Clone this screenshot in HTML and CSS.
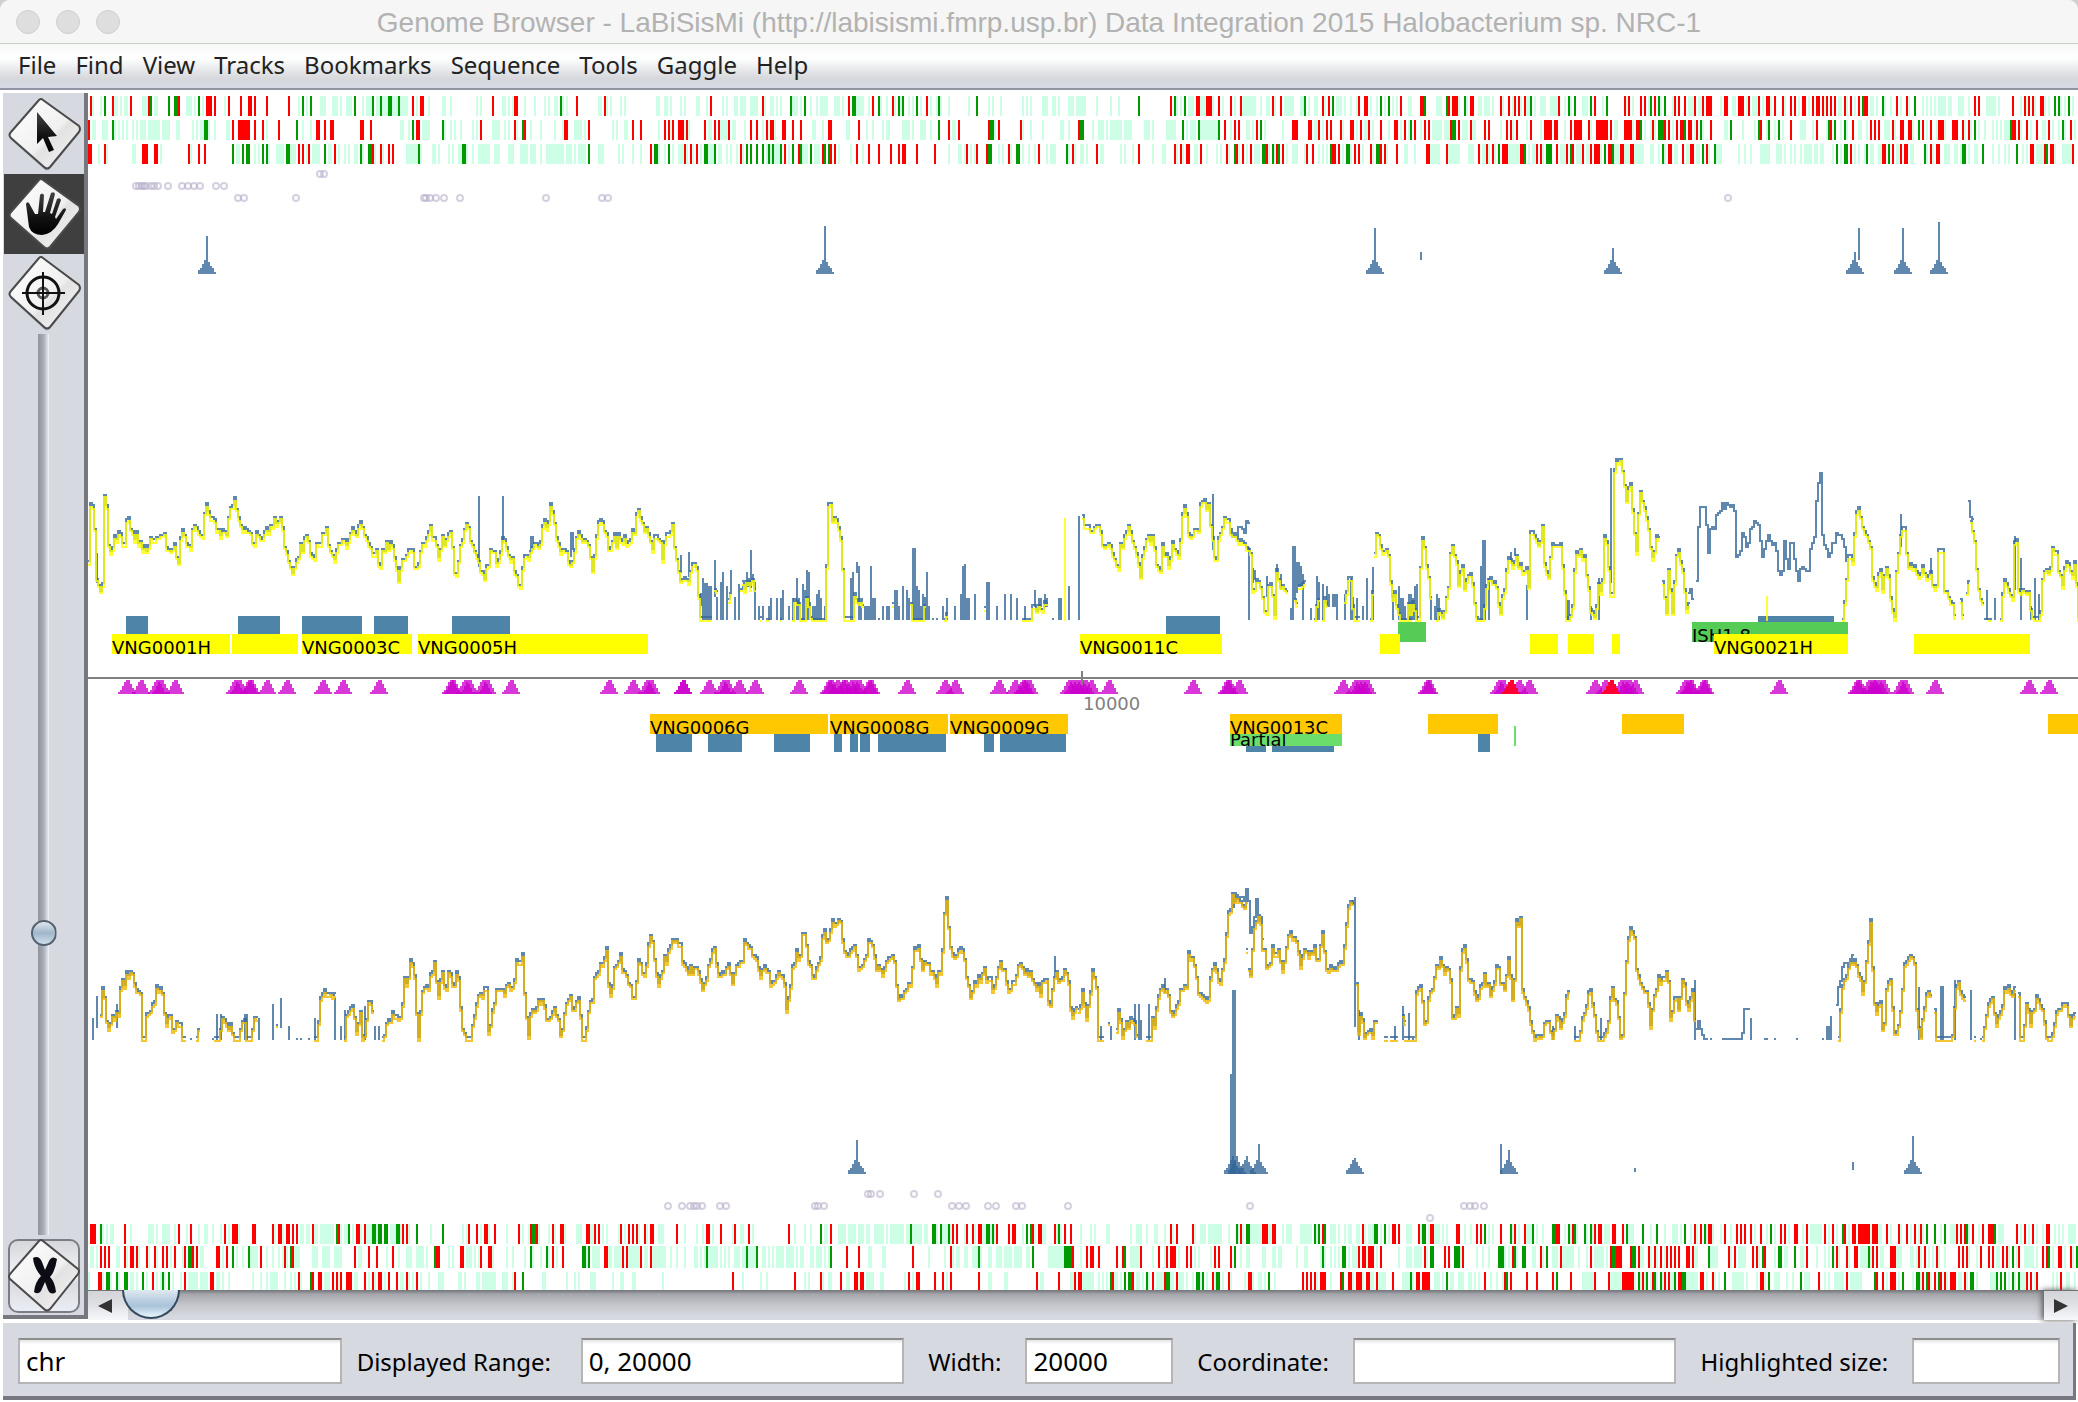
FILE: index.html
```html
<!DOCTYPE html>
<html lang="en">
<head>
    <meta charset="UTF-8">
    <meta name="viewport" content="width=device-width, initial-scale=1.0">
    <title>Genome Browser</title>
    <link rel="stylesheet" href="styles.css">
</head>
<body>
    <div class="window">
        <header class="titlebar">
            <div class="lights">
                <button class="light" aria-label="Close"></button>
                <button class="light" aria-label="Minimize"></button>
                <button class="light" aria-label="Zoom"></button>
            </div>
            <h1>Genome Browser - LaBiSisMi (http://labisismi.fmrp.usp.br) Data Integration 2015 Halobacterium sp. NRC-1</h1>
        </header>

        <nav class="menubar">
            <button>File</button>
            <button>Find</button>
            <button>View</button>
            <button>Tracks</button>
            <button>Bookmarks</button>
            <button>Sequence</button>
            <button>Tools</button>
            <button>Gaggle</button>
            <button>Help</button>
        </nav>

        <main class="workspace">
            <aside class="toolbar">
                <svg class="defs" width="0" height="0">
                    <defs>
                        <linearGradient id="tile" x1="0" y1="0" x2="1" y2="1">
                            <stop offset="0" stop-color="#ffffff"/>
                            <stop offset="0.55" stop-color="#f0f0f0"/>
                            <stop offset="0.6" stop-color="#e2e2e2"/>
                            <stop offset="1" stop-color="#f8f8f8"/>
                        </linearGradient>
                        <linearGradient id="ink" x1="0" y1="0" x2="0" y2="1">
                            <stop offset="0" stop-color="#444"/>
                            <stop offset="0.6" stop-color="#111"/>
                            <stop offset="1" stop-color="#000"/>
                        </linearGradient>
                    </defs>
                </svg>
                <button class="tool" aria-label="Select">
                    <svg viewBox="0 0 80 80" width="80" height="80">
                        <path class="shade" d="M39 8 Q37 6 35 8 L7 40 Q4 43 7 46 L40 75 Q43 78 46 75 L75 40 Q77 37 75 34 Z"/>
                        <path class="diamond" d="M39 6 Q37 4 35 6 L7 38 Q4 41 7 44 L40 73 Q43 76 46 73 L75 38 Q77 35 75 32 Z"/>
                        <path fill="url(#ink)" d="M33 18 L33 50 L39 44 L45 58 L50 56 L44 43 L53 42 Z"/>
                    </svg>
                </button>
                <button class="tool selected" aria-label="Scroll">
                    <svg viewBox="0 0 80 80" width="80" height="80">
                        <path class="diamond" d="M39 6 Q37 4 35 6 L7 38 Q4 41 7 44 L40 73 Q43 76 46 73 L75 38 Q77 35 75 32 Z"/>
                        <path fill="url(#ink)" d="M22 30 Q23 27 25 29 L31 40 L34 40 L36 21 Q38 18 40 21 L39 38 L41 38 L47 19 Q50 17 51 20 L46 39 L48 40 L53 25 Q56 23 57 26 L51 43 L52 45 L59 35 Q62 33 62 36 L54 50 Q48 60 38 61 Q28 61 25 53 Z"/>
                    </svg>
                </button>
                <button class="tool" aria-label="Center">
                    <svg viewBox="0 0 80 80" width="80" height="80">
                        <path class="shade" d="M39 6 Q37 4 35 6 L7 39 Q4 42 7 45 L40 75 Q43 78 46 75 L75 39 Q77 36 75 33 Z"/>
                        <path class="diamond" d="M39 4 Q37 2 35 4 L7 37 Q4 40 7 43 L40 73 Q43 76 46 73 L75 37 Q77 34 75 31 Z"/>
                        <g fill="none" stroke="#111">
                            <circle cx="39" cy="39" r="16" stroke-width="3"/>
                            <circle cx="39" cy="39" r="5" stroke="#555" stroke-width="3"/>
                            <path stroke-width="2" d="M39 18 V61 M18 39 H61"/>
                        </g>
                    </svg>
                </button>
                <input class="zoom" type="range" min="0" max="100" value="67" aria-label="Zoom level">
                <button class="chromosome" aria-label="Chromosomes">
                    <svg viewBox="0 0 72 74" width="72" height="74">
                        <path class="diamond" d="M35 2 Q33 0 31 2 L2 35 Q0 38 2 40 L36 70 Q39 73 42 70 L70 35 Q72 32 70 30 Z"/>
                        <path fill="#0c0c14" d="M25 19 Q31 16 34 23 L37 31 L41 22 Q44 16 49 20 Q47 33 42 38 Q47 43 48 53 Q43 57 40 51 L37 43 L33 52 Q30 56 26 53 Q27 43 33 37 Q26 29 25 19 Z"/>
                    </svg>
                </button>
            </aside>

            <section class="viewer">
                <svg class="plot" id="plot" role="img" aria-label="Genome tracks"></svg>
                <div class="scrollbar">
                    <button class="step" aria-label="Scroll left"><svg width="14" height="14"><path d="M14 0 V14 L0 7 Z"/></svg></button>
                    <div class="groove"><div class="thumb"></div></div>
                    <button class="step end" aria-label="Scroll right"><svg width="14" height="14"><path d="M0 0 V14 L14 7 Z"/></svg></button>
                </div>
            </section>
        </main>

        <form class="status">
            <input class="wide" type="text" id="seq" value="chr" aria-label="Sequence">
            <label class="first" for="range">Displayed Range:</label>
            <input class="wide" type="text" id="range" value="0, 20000">
            <label for="width">Width:</label>
            <input class="narrow" type="text" id="width" value="20000">
            <label for="coordinate">Coordinate:</label>
            <input class="wide" type="text" id="coordinate">
            <label for="highlight">Highlighted size:</label>
            <input class="narrow" type="text" id="highlight">
        </form>
    </div>
    <script src="tracks.js"></script>
</body>
</html>
```

FILE: styles.css
```css
* {
    box-sizing: border-box;
}
html, body {
    height: 100%;
    margin: 0;
}
body {
    background: #d0d0d0;
    color: #000;
    font-family: "Noto Sans", "Open Sans", sans-serif;
    font-size: 24px;
}
button {
    border: none;
    background: none;
    padding: 0;
    font: inherit;
    color: inherit;
}
.window {
    display: flex;
    flex-direction: column;
    height: 100vh;
    background: #fff;
    border-radius: 10px 10px 0 0;
    overflow: hidden;
}

/* title bar */
.titlebar {
    display: flex;
    align-items: center;
    height: 44px;
    flex: none;
    padding: 0 16px;
    background: #f6f6f6;
    border-bottom: 1px solid #c9cdc9;
}
.lights {
    display: flex;
    gap: 16px;
    width: 104px;
}
.light {
    width: 24px;
    height: 24px;
    border-radius: 50%;
    background: #dedede;
    border: 1px solid #cecece;
}
.titlebar h1 {
    flex: 1;
    margin: 0 104px 0 0;
    padding-top: 2px;
    text-align: center;
    font: 28px "Liberation Sans", Arial, sans-serif;
    color: #b2b2b2;
    white-space: nowrap;
}

/* menu bar */
.menubar {
    display: flex;
    gap: 19px;
    height: 46px;
    flex: none;
    padding: 0 18px 4px;
    background: linear-gradient(#f5f8f5, #fdfefd 24%, #fbfcfc 36%, #d6d8dc 78%, #d6d9e2);
    border-bottom: 2px solid #9293a3;
    color: #222;
}

/* tool column */
.workspace {
    display: flex;
    flex: 1;
    min-height: 0;
}
.toolbar {
    display: flex;
    flex-direction: column;
    align-items: center;
    width: 85px;
    margin: 3px 0 1px 3px;
    padding: 1px 0 2px;
    background: #d6d9e0;
    border-right: 4px solid;
    border-bottom: 4px solid;
    border-color: #77787f;
    flex: none;
}
.defs {
    position: absolute;
}
.tool {
    width: 80px;
    height: 80px;
    flex: none;
}
.tool svg, .chromosome svg {
    display: block;
}
.tool.selected {
    background: #3f3f3f;
}
.diamond {
    fill: url(#tile);
    stroke: #4a4a4a;
    stroke-width: 2;
}
.shade {
    fill: #b3b6bd;
}
.zoom {
    appearance: none;
    writing-mode: vertical-lr;
    flex: 1;
    min-height: 0;
    width: 26px;
    margin: 0;
    background: linear-gradient(to right, #8f939f, #a9adb7 50%, #d3d6dd 82%, #f4f5f7) center / 11px 100% no-repeat;
    clip-path: inset(0 round 6px);
}
.zoom::-webkit-slider-thumb {
    appearance: none;
    width: 26px;
    height: 26px;
    border: 2px solid #53606d;
    border-radius: 50%;
    background: linear-gradient(#dfe7ee, #9fb6ca 50%, #cfdeea);
}
.chromosome {
    width: 72px;
    height: 74px;
    margin-top: 4px;
    flex: none;
    border-radius: 10px;
    background: linear-gradient(#d3d5da, #f4f5f7 50%, #d9dbe1 60%, #eceef5);
    box-shadow: inset 0 0 0 2px #7b7d85;
}

/* tracks */
.viewer {
    display: flex;
    flex-direction: column;
    flex: 1;
    min-width: 0;
}
.plot {
    display: block;
    width: 100%;
    flex: 1;
    min-height: 0;
    background: #fff;
}
.plot text {
    font: 18px "DejaVu Sans", sans-serif;
}
.crisp {
    shape-rendering: crispEdges;
}
.l { fill: #ccffe6; }
.g { fill: #009900; }
.r { fill: #ff0000; }
.circle {
    fill: none;
    stroke: #b9afca;
    stroke-opacity: 0.6;
    stroke-width: 2;
}
.trace, .yellow-trace, .gold-trace {
    fill: none;
    stroke-width: 2;
}
.trace { stroke: rgba(51, 102, 153, 0.78); }
.yellow-trace { stroke: rgba(255, 255, 0, 0.8); }
.gold-trace { stroke: rgba(240, 184, 0, 0.8); }
.bar { fill: rgba(51, 102, 153, 0.78); }
.site { fill: rgba(204, 0, 204, 0.78); }
.site.hot { fill: #ff0033; }
.probe { fill: #4f84a9; }
.forward { fill: #ffff00; }
.reverse { fill: #ffc800; }
.element { fill: #55cc55; }
.partial { fill: #6bdd6b; }
.axis, .axis-label { fill: #808080; }

/* horizontal scroll bar */
.scrollbar {
    display: flex;
    height: 30px;
    flex: none;
    background: linear-gradient(#737478, #a5a6ab 14%, #c4c6cb 50%, #d6d9e0 90%);
}
.step {
    display: flex;
    align-items: center;
    padding-left: 10px;
    width: 40px;
    background: linear-gradient(#d3d4d8, #dcdee2 40%, #f7f8fa);
    border-top: 1px solid #737478;
    fill: #333;
}
.step.end {
    width: 34px;
    box-shadow: -2px 0 6px #555;
}
.groove {
    flex: 1;
    margin-left: -6px;
    overflow: hidden;
    z-index: 1;
}
.thumb {
    width: 58px;
    height: 29px;
    border: 2px solid #34495e;
    border-top: none;
    border-radius: 0 0 29px 29px;
    background: linear-gradient(#dfe8f0, #b4cade 45%, #abc4da 60%, #e6f6fc);
}

/* status fields */
.status {
    display: flex;
    align-items: center;
    gap: 24px;
    flex: none;
    height: 77px;
    margin: 3px 2px 2px 3px;
    padding: 3px 13px 0 15px;
    background: #d6d9e0;
    border-right: 3px solid #77787f;
    border-bottom: 4px solid #77787f;
}
.status label {
    flex: none;
    white-space: nowrap;
}
.status .first {
    width: 200px;
    margin-left: -9px;
}
.status input {
    min-width: 0;
    height: 46px;
    padding: 0 6px;
    font: inherit;
    font-size: 26px;
    border: 2px solid #b5b5b5;
    border-top-color: #8d8d8d;
    background: linear-gradient(#e4e4e4, #fff 4px);
}
.status .wide {
    flex: 324 1 324px;
}
.status .narrow {
    flex: 148 1 148px;
}
```

FILE: tracks.js
```js
// Tracks come in tiles. A tile covers `w` units of the strip from `x`,
// and the positions in it run from 0 to 1568.
const STRIP = { left: 88, top: 90, width: 1990, height: 1200 };

// open reading frames: l = codon hit, g = start, r = stop
const frames = [
    { y: 96, h: 20, tiles: [
        { x: 0, w: 700,
          l: "209 226 257-264 271 280 285 318-331 346-354 418-430 437 452-458 504 670 685-692 718-729 744-757 764 775-788 812 820-832 840-850 857-868 880-892 897-914 930-938 961 990-999 1010 1069 1077 1124-1133 1139 1148 1175 1198 1220 1228 1243 1249 1262 1270 1338-1344",
          g: "235 338 378 391-400 446 679 697 795 836 853 869-878 894 1257",
          r: "204 253 293 334 401 462-475 481 513 540 558 562 571 598 648 925 941-950 1104 1154 1158 1293" },
        { x: 600, w: 740,
          l: "2 15 23 45 53 119-127 136-144 151 172 180 203-212 227 261 269 284-292 297-309 318-335 348 360-370 375 384 407-420 427 447 460 466-483 496-509 515 543-559 570 595 609 625 636 654 664 680 700 712 722 741 780 824 832 850 895 904 913 937-949 958-966 972 991-999 1003 1007-1030 1053 1083 1100 1224 1232 1244-1260 1273-1284 1300 1318 1345 1360-1387 1390 1398-1404 1412-1420 1432 1449-1471 1484-1492 1502 1513-1522 1538 1560",
          g: "405 434 534-542 591 633 642 672 718 799 1142 1218 1240 1494 1553",
          r: "10 235 345 527 579 621 693 1210 1263-1271 1284-1297 1312 1337 1358 1426 1443 1532 1545" },
        { x: 1338, w: 740,
          l: "0-8 15 27 40 70 83 98 116 124 148-157 208-220 239 258 275 297-305 309-321 329 350 370 388 400-406 418 428-441 449-466 480 494 517-531 560 612 625 656-664 672 686 708 740-754 762-770 812 836 842 865 877-890 900 918 948 975 996 1018 1033 1060-1070 1078 1096 1127-1135 1144 1160 1172 1192 1212 1240 1248 1257 1265 1271-1288 1293-1301 1314-1326 1337 1373-1394 1400 1447 1460 1478 1498 1508 1530 1542 1558",
          g: "91 108 184 231 269 409 489 502 536 570 663 680 693 1110-1116 1155 1222 1519 1528 1549",
          r: "44 56-64 133 175-183 234 243-253 281-287 345 362 375 383 396 468 544 608 616 642 650 670 714 723 735 756 773 780-792 818-826 848-860 871 892 908-915 926 943 960 967 983-992 1006 1013-1021 1028 1037 1045 1053 1074 1087 1105 1116-1122 1184 1206 1350 1358 1430 1456 1464 1473 1488-1495" }
    ] },
    { y: 120, h: 20, tiles: [
        { x: 0, w: 700,
          l: "204-215 229-240 258 266 275 284 297 307 314-327 332-357 363-381 395-403 432 443 450-456 470 481 507-515 598 677 697 897-905 918 946-963 999 1010 1019 1033 1060 1067 1102-1120 1133 1142 1160 1185-1193 1211 1239-1247 1261 1286-1304 1312",
          g: "253 458-466 666 925 992 1171",
          r: "200 522 534-559 571 590 625 708-717 728 740-747 806-815 831 932-941 1073-1079 1154 1175 1265-1271 1319" },
        { x: 600, w: 740,
          l: "27 36 51-59 125 149 180-190 229-238 256-270 280-288 307 322 346 358 372 449-457 472 521-530 566 578 600 606-614 640-657 662 678-691 701 746-754 838 895 913 939 975-983 994 1045 1056-1068 1073 1081-1106 1110-1127 1153-1165 1172 1199-1220 1244 1252-1264 1273-1308 1336 1369-1377 1384 1408 1447 1513-1520 1530",
          g: "718 826-834 1017-1026 1235 1269 1312 1401",
          r: "70 87 138 146 155 165-178 184 222 243 252 273 320 333 354 360-369 386-394 409 426 483-492 549 739 761 824 846 892 1015 1324 1345 1354 1392 1466-1478 1500-1509 1524 1541 1549" },
        { x: 1338, w: 740,
          l: "12 40 56-62 75 110 132 150 175 199-220 226-240 262-275 285-292 345 370 400 430 480 536 585-593 627 652 660-675 710 755 775 818-826 860 884 910 922-929 942 980-992 1005 1035 1066 1080 1102-1110 1121 1155-1168 1181 1218 1250 1268 1285 1330 1343 1357 1370 1388 1396 1403 1411-1425 1447 1470 1490-1500 1515 1528 1542 1562",
          g: "142 155 241-250 643 678-691 736 769 833 890 914 935 960 1041 1053 1074 1231 1350 1426 1536",
          r: "6 25-34 49 66 91 119-127 144 163 184 193 240 257 282 311 320 358 367 379 409 436-453 458-466 492 500-517 532 547-572 578 606-623 632-642 668 693 701 718 725-735 743-750 761 789 895 958 1015 1046 1091 1129 1137 1146 1174 1191-1199 1208-1215 1240 1257 1272-1284 1301-1314 1324 1337 1430 1434 1443 1460 1481 1507 1553" }
    ] },
    { y: 144, h: 20, tiles: [
        { x: 0, w: 700,
          l: "222 239 296-305 360 428 530-538 571 578 604 620-632 636 651-658 663 688 700-717 733-745 759 773 782 795-802 815 840 860 910-935 942 968-977 983 1006 1016 1026-1034 1046 1060 1072-1097 1107-1119 1139-1151 1166-1182 1188-1200 1212 1223-1262 1266-1280 1284-1292 1296-1312 1340-1344",
          g: "522 544 551-560 590 598 642-650 728 809 825-835 939 1036-1044 1319",
          r: "198-206 235 318-331 346-353 423 446 459 670 679 692 751 836 853 871 881" },
        { x: 600, w: 740,
          l: "0-8 40 48 70 87 125 138 155 165-178 186 199 212 230-240 248-260 267 276 292 305 350-382 400 430-440 455-465 507 530 557 740 759-767 772 785 795 846 855 872 898 907 920 947 954-966 995 1006 1017-1026 1033 1060-1068 1104 1112 1130 1172 1191-1199 1222 1235 1260-1268 1286 1307 1315 1332 1355 1370 1384-1400 1418 1430 1456 1466-1478 1494 1524 1531 1539",
          g: "114-123 146 220-229 244 311 320 333 346 358 366 383 409 426 447 477 486 822-831 882-890 990 1345 1404-1412 1426 1440 1550",
          r: "108 180 193 206 299 392 422 469-474 490 498 545 570 591 616 634 640-648 672 710 778 799 820 867 930 1002 1053 1142 1218 1230 1243-1250 1273 1328 1349 1362 1379 1413 1434 1446 1498 1511 1552-1560" },
        { x: 1338, w: 740,
          l: "10 27 55 75 105 140-148 163 197-216 233-259 275-283 288 305-315 322 334 362-385 405 412-420 436 470-485 506-515 525-535 558 586-597 608-618 629-648 661-670 680 692 712-722 737-744 757-765 785 803-813 850 862 873 894-915 928-941 948 958 968 982 988-1003 1009-1017 1021-1029 1050 1062-1070 1095 1105 1117 1129-1137 1145-1152 1182-1190 1212-1222 1248 1262 1285-1297 1305-1313 1320 1336 1346-1354 1388 1400 1413 1422 1450 1460 1480-1495 1520 1534-1554",
          g: "17-25 38 81-89 341 396 432 441-453 493 566 583 689 771-777 799 1057 1073-1081 1121 1168 1244 1322-1331 1367 1439 1504",
          r: "2 34 43 70 91 100 125 186-195 231 299 316 328 348-360 386-394 422 430 464 487 499 519 536 543-555 570-581 598-605 619-627 699-708 731 746-754 780 1087 1153-1161 1176 1191 1200-1208 1257 1267-1276 1467-1475 1498 1510-1517 1558" }
    ] },
    { y: 1224, h: 20, tiles: [
        { x: 0, w: 700,
          l: "232 240 246-254 292 333-345 350 363-381 392 419 445 457-466 478 495 515 537 618 636 672-682 686-696 705 712 717-748 762 771 778 790 810 822-832 843 875-885 899 915 965 1037 1046 1073-1080 1097 1135 1170 1182-1190 1208 1230 1245 1265 1290-1304 1316-1330 1350 1359 1387 1400 1430 1450 1475-1487 1534",
          g: "226 755 782 833-842 847-856 860-869 887-896 934 992 1193-1201",
          r: "202-215 280 401 428 504 520-533 564-573 611 624-631 641-650 656 665 701 759 797-806 817 902 911 1050 1068 1084-1092 1109 1162 1190 1203 1237 1255-1262 1314-1321 1333 1342 1391 1409 1417 1426 1445 1456-1464 1516" },
        { x: 690, w: 700,
          l: "15 30 50 97 112-121 137-142 235 257 271 300-311 332-349 354-372 376-390 394-403 412-435 441 448-479 484-491 497-519 524-533 552-557 566-577 583 615 640 656-662 673 683 745 775 790-797 820 830 876 898 907 932-941 988 1000-1011 1023 1040-1047 1064 1081 1131 1142-1156 1160-1191 1208 1230 1240 1255-1281 1296-1303 1329 1336-1348 1366-1393 1405 1434-1447 1453 1467 1474-1484 1490-1501 1511 1520-1531",
          g: "293 494 543-551 561 580 663-671 678 755 764 826 1225 1246-1254 1400 1411 1421 1533-1541",
          r: "36-45 69 101 131 222 316 588 598 620 634 645-654 687 714 721-730 768 780-788 817 839 853 1077 1090 1126 1234 1281-1294 1304-1313 1417 1507" },
        { x: 1378, w: 700,
          l: "6 24 63-76 96 112 126-138 145 154 195 208 248 257 302 318 332-345 357 369 418 434 447 470 481 506-520 560-574 612 643 660-670 677 699 715 735 752 768 790 845 870 890 920 954 968-995 1012 1030 1053 1104 1122-1130 1150 1172 1195 1210 1222 1262 1281-1295 1325 1345 1390-1402 1440 1460 1474 1490 1516 1525 1536 1546-1564",
          g: "16 99-107 238 298 347 390-399 428 441 464 477 558 594 625 688 728-732 880 1041 1230 1248 1270 1319 1382",
          r: "31-40 47 92 116-125 175-184 222 230-235 275 307 329 399-408 437 486 493-501 525-533 549 710 721-727 739-748 777 804 813 822 835 858 902 911 932-941 961 1001 1019 1045 1061-1070 1075-1102 1107-1119 1140 1167 1185 1203 1216 1297 1306 1315 1333 1355 1366-1379 1431 1449 1467 1496-1505" }
    ] },
    { y: 1246, h: 22, tiles: [
        { x: 0, w: 700,
          l: "202-211 217 260-268 285 312 335 352 384 410 438 450-458 500 530 545 561-577 598 608-613 623 632 645 660-670 700-712 721-740 750-767 800-810 868 892 910-922 930-948 957 1005 1014 1044 1050-1058 1065 1073 1105 1134 1149 1175 1196 1214 1230 1247 1313 1325-1346 1363-1370 1376-1393 1408-1433 1442-1453 1462-1491 1501 1515 1535",
          g: "421-429 524 558 652 974 1189 1225 1304-1312 1319",
          r: "226 235 244 280 291-300 307 329 347 365 374 392 414 432 441 484-492 508 584 638 656 795 826 844 880 977-985 1030-1038 1077 1093-1101 1237 1261 1353-1361 1395 1404 1436 1458" },
        { x: 690, w: 700,
          l: "9-18 24 32 40-63 70 79 88 99-111 116-125 130-148 161-169 177 186 193-211 215-233 239 247-255 269-277 282-295 303 311 399-407 430-439 535 571 590 596-604 614-622 632-645 651 668-676 685-699 703-721 725-744 753-762 802-838 860 875 985-1007 1037 1062 1092-1097 1131 1140 1167 1234 1245-1254 1281-1290 1304-1313 1317-1326 1359 1375-1384 1412 1422 1436 1445 1454 1475 1484-1497 1518 1540",
          g: "38 127 150 316 647 768 838-855 973 1221 1418 1460-1469",
          r: "351 378 499 584 857 890 896-905 915 956 970 1010 1050 1068 1075-1089 1113 1122 1176 1185 1212 1499 1505-1514 1519-1532" },
        { x: 1378, w: 700,
          l: "47 63-76 80-100 110 186 222 235 248 285 295 312 345-356 370 388-402 414-440 449 468 484-507 515 588-597 613 627 641 708-718 745-760 790 806-825 853 888 910-920 945-955 983 1000 1010 1033 1055 1080-1098 1105 1123-1135 1162-1174 1192-1201 1206 1218 1232 1242 1258 1270 1325 1340 1384-1392 1415 1430 1448-1470 1475 1510 1540 1557",
          g: "117-125 171-183 269-280 306 323-332 378 524-532 570-578 741 861 897-905 934 1019 1100 1422 1503 1566",
          r: "6 106 150 159 190 302 365 410 477 521 533-547 566 584 607 620 634 648 657 665 674 691-699 705 786 800 840 849 863-868 961 1028 1050 1066-1075 1109 1118 1147-1160 1212 1225 1252 1302 1310 1319 1351 1369 1378 1400 1409 1436 1488 1497 1523-1532 1552" }
    ] },
    { y: 1272, h: 18, tiles: [
        { x: 0, w: 700,
          l: "199 230 250 268 290-298 309 328 350 360 370 384-390 405 421-444 449-467 484-493 499 511 566 584 597 605 611-622 640 651 659 672 702 725-735 739 760 793 800 825 842 862 895-905 917 925 941 959 981-994 1026-1036 1041 1068 1075 1080-1112 1124-1140 1149 1214-1223 1270 1288 1296 1322-1335 1373 1391-1399 1416-1424 1485",
          g: "237-245 262 278-286 320 365 378 697 1171",
          r: "220-228 342 414 471-479 670 701 712-720 746 755 764 775-788 817 835 847-856 871 889 911 934 1153" },
        { x: 690, w: 700,
          l: "119 159 172 257 266 297 309-318 349-358 376-380 392-397 400-411 426-435 481 499 575 667-676 703-711 784-792 851-860 879-905 916 924 936 951-957 965 998-1010 1016 1030 1044-1063 1077-1086 1092-1106 1113 1127 1145 1158 1175 1192 1212 1243 1262 1271-1280 1290 1310 1405 1436 1487 1508 1526 1532",
          g: "942 975 981-989 1023 1066-1074 1133-1141 1149 1178-1186 1297 1462",
          r: "96 235 293 338 367-375 381-390 490 506-514 549 566 584 647 777 826 862 869-878 948 992 1037 1064 1090 1171 1207 1250-1258 1373 1382 1391 1400 1411-1425 1457 1474-1483 1492-1505 1514-1523 1539" },
        { x: 1378, w: 700,
          l: "0-18 55-72 79 88 125-139 145 160-168 181-193 202-212 218 226 252 265 280 457-484 520-547 576 590 598 612 627 640 655 661 692-718 735 755 764 795-820 828 847 868 885-900 918 930 952-967 1000 1010 1021-1046 1058-1083 1118 1138 1165 1197 1217 1240 1262 1275 1300-1310 1320 1340 1372-1385 1412 1429 1440-1451 1470 1512 1521 1540-1551 1562",
          g: "74 154 289 401 585 602 620 634 665 681-690 777 876 948 1113 1176 1205-1213 1228 1256 1327-1335 1387 1396 1405 1422 1436",
          r: "33 86-94 99-116 240 284 298 334 356 392 432 486 518 547-573 593 616 643 652 673-681 721-730 750 856-865 988 1050 1118 1131 1147-1160 1221 1234 1247 1259 1270 1282-1295 1315 1454 1463 1475 1530" }
    ] }
];

const circles = [
    { y: 174, at: "320 324" },
    { y: 186, at: "136 139 142 144 146 151 154 158 168 182 188 194 200 216 224" },
    { y: 198, at: "238 244 296 424 426 430 436 444 460 546 602 608 1728" },
    { y: 1194, at: "868 871 880 914 938" },
    { y: 1206, at: "668 682 690 694 697 702 720 726 815 818 824 952 959 966 988 996 1016 1022 1068 1250 1464 1470 1475 1484" },
    { y: 1218, at: "1430" }
];

// x, top of the spike
const peaks = [
    { base: 274, at: [[206, 236], [824, 226], [1374, 228], [1612, 248], [1854, 252], [1902, 228], [1938, 222]] },
    { base: 1174, at: [[856, 1140], [1232, 1156], [1236, 1156], [1246, 1156], [1258, 1144], [1354, 1158], [1508, 1150], [1912, 1136]] }
];
const marks = [
    [1420, 252, 2, 8], [1858, 228, 2, 32],
    [1230, 1074, 2, 100], [1232, 990, 4, 184],
    [1500, 1144, 2, 30], [1634, 1168, 2, 4], [1852, 1162, 2, 8]
];

// signal traces, "x,y" in tile units, y in thirds from `y`; ";" lifts the pen
const traces = [
    { y: 440, floor: 543, cls: "yellow-trace", tiles: [
        { x: 80, w: 670,
          line: "20,370 22,205 30,205 34,280 36,410 42,440 44,470 48,440 53,420 54,186 63,188 66,360 72,350 76,300 82,318 90,298 100,315 104,300 108,230 114,235 117,290 122,280 126,310 132,290 140,325 148,330 155,360 162,290 172,300 180,282 188,310 195,290 202,330 210,350 216,320 222,330 230,380 236,280 242,280 250,335 258,320 262,270 272,265 282,300 288,290 290,235 297,205 303,240 312,245 320,290 330,285 340,295 347,230 353,190 362,190 368,240 378,270 388,290 394,275 400,320 406,330 410,265 420,310 428,300 436,275 446,270 456,250 468,240 474,295 480,335 486,380 498,400 508,380 514,330 522,320 530,285 538,335 546,355 552,325 560,330 568,280 576,268 582,320 592,360 600,340 606,300 616,310 624,320 630,270 638,285 645,300 655,265 662,262 668,310 676,320 684,365 692,325 700,385 706,345 716,325 726,320 734,345 738,390 742,430 748,400 754,370 764,350 772,318 778,345 788,415 794,340 804,320 810,290 818,275 828,300 838,350 846,305 858,310 866,290 870,335 877,420 886,360 896,300 900,245 908,280 914,330 924,340 932,380 942,420 950,400 958,345 968,350 976,385 984,330 990,310 1000,365 1010,370 1018,395 1024,455 1032,455 1036,360 1046,350 1056,325 1066,330 1076,310 1082,260 1092,265 1100,215 1108,250 1114,310 1122,340 1134,325 1140,350 1150,400 1158,310 1166,280 1178,300 1190,310 1196,400 1204,350 1210,240 1220,230 1228,290 1240,350 1246,300 1256,315 1264,295 1272,310 1282,330 1290,295 1298,290 1303,210 1310,230 1320,265 1330,280 1338,340 1346,290 1356,310 1362,375 1370,300 1380,295 1386,250 1392,340 1398,390 1405,420 1412,400 1420,430 1428,415 1434,380 1444,375 1448,540 1475,543;1484,470 1490,472;1518,480 1522,450;1548,446 1568,446",
          bars: "38,340,430 934,168,380 990,168,310 1150,275,350 1154,275,330 1056,288,330 1060,288,330 1406,345,400 1426,335,410 1454,460,500 1458,415 1463,428 1468,428 1472,438 1477,438 1486,360,470 1491,472 1501,425 1504,396 1514,438 1524,390,455 1533,472 1543,432 1551,438,445 1561,396,440 1565,414,440" },
        { x: 740, w: 670,
          line: "5,446 24,446 26,425 30,430 36,470 37,543;48,540 50,505;62,543 66,543;94,543 97,543;122,543 124,505 128,480 136,482 138,543 150,543 152,482 162,482 164,543 192,543;200,543 203,208 213,210 216,245 226,245 230,295 236,330 239,400 242,543 264,540 266,480 272,470 274,370 276,500 286,505 290,543;356,505 360,543;398,505 402,543 426,543 430,505 434,543;480,543 486,505;572,505 575,543;660,543 680,543 682,505 718,507 720,543;760,543 760,234;802,232 805,265 815,270 822,282 830,265 838,270 842,265 847,325 853,335 860,305 868,310 872,355 880,385 886,405 890,305 897,318 903,270 910,270 917,310 926,325 930,375 938,415 944,320 954,310 964,290 970,350 976,390 980,420 988,330 996,360 1003,380 1010,320 1018,330 1024,355 1030,300 1036,212 1044,215 1050,300 1056,310 1064,280 1072,270 1076,210 1086,200 1096,210 1102,270 1108,330 1112,385 1118,300 1126,260 1134,235 1142,245 1148,290 1160,300 1170,310 1180,325 1190,340 1196,350 1197,460 1204,440 1215,420 1222,470 1230,540 1236,440 1244,460 1250,540 1254,405 1262,450 1270,425 1278,475;1300,480 1304,505;1308,460 1314,445 1322,440 1323,543;1345,543 1350,460 1356,510;1364,543 1366,470 1374,500;1416,500 1420,415 1428,415 1434,540 1450,543;1476,543 1482,400;1486,340 1488,285 1496,310 1504,330 1518,345 1522,470 1530,475 1538,510 1542,543 1568,543",
          over: "1150,280 1160,285 1170,258 1190,262 1192,350",
          bars: "26,330,440 16,396,440 30,402,430 36,425 45,498 54,498 68,498 72,474 87,474 96,474 100,450 114,498 124,474 133,414 138,474 148,432 152,450 157,390 161,396 172,498 176,498 180,462 185,450 190,474 199,498 260,414 265,396 274,366,400 279,378 284,498 292,498 297,498 302,498 306,378 311,474 316,474 325,534 334,498 343,498 348,498 362,450 367,450 371,498 381,438 391,450 396,474 405,324 408,324 413,438 418,450 424,498 429,462 434,470 438,396 443,498 452,534 461,534 474,498 484,474 502,498 517,462 522,378 526,372 531,474 536,474 550,462 578,426 583,426 602,498 620,462 634,462 648,474 667,498 690,450,500 700,474,500 705,474,500 713,462,500 718,474,500 732,534 748,474 752,474 770,438 793,228 1107,162,330 1192,320 1200,384,430 1206,390,420 1234,408,470 1256,372,405 1266,402,450 1289,504 1294,318 1298,318,478 1304,366,460 1309,366,440 1314,378,440 1318,402 1334,504 1350,408 1356,426 1364,432 1374,438,500 1380,462,500 1386,462,500 1392,462,500 1397,462 1414,462 1430,414 1436,470 1444,474 1458,498 1468,414 1480,380 1528,460 1542,438 1548,474 1556,498 1564,462" },
        { x: 1400, w: 678,
          line: "0,543 6,543;16,543 18,490 24,530 30,480 34,540 44,540 48,290 54,300 58,385 66,420 70,505 72,543;84,543 88,505 98,543 108,480 114,390 118,325 126,345 134,435 144,370 148,455 156,410 164,430 172,505 176,543 190,543 196,470 208,420 220,440 230,540 236,480 246,400 252,350 258,385 266,345 274,380 282,400 290,385 296,455 300,275 310,295 318,340 328,265 334,390 342,410 352,330 362,320 372,305 376,400 384,543 392,543 400,470 404,345 414,335 426,360 432,430 440,510 450,543 458,430 466,500 470,295 478,300 484,480 492,445 492,85 505,82 512,78 516,140 522,180 528,130 534,130 538,240 546,330 552,180 558,170 564,210 572,250 576,320 584,370 590,300 598,305 600,480;608,420 614,540 620,400 630,540 636,360 642,345 652,390 656,440 664,530 670,460 670,543;848,543 848,468;1024,543 1030,445 1036,350 1046,370 1052,240 1058,195 1066,270 1080,285 1088,330 1092,430 1100,470 1108,400 1116,455 1124,390 1132,455 1140,540 1144,540 1146,420 1154,330 1164,235 1170,345 1178,400 1186,370 1196,425 1206,400 1216,410 1228,415 1238,455 1246,320 1256,350 1258,450 1268,480 1278,500 1282,543;1298,500 1300,540;1312,460 1316,415;1320,250 1326,290 1332,390 1340,470 1346,500 1350,543;1364,543 1368,543;1388,543 1390,480 1400,420 1408,475 1416,480 1420,300 1426,310 1428,460 1434,480 1442,440 1452,465 1456,510 1462,540 1478,543 1486,410 1494,395 1502,410 1508,330 1516,330 1522,390 1530,440 1538,380 1546,390 1552,420 1560,380 1564,450 1568,540",
          over: "668,455 676,462 678,540;686,430 688,260 692,220 698,200 706,205 710,330 714,360 718,250 724,275 730,235 738,220 742,190 750,225 756,190 764,210 772,215 776,330 782,350 790,295 798,310 806,290 812,270 818,232 826,240 832,290 838,350 844,330 850,275 858,300 868,320 876,400 884,390 888,320 896,400 904,290 912,360 920,415 928,360 936,390 944,385 950,300 956,330 960,240 966,120 973,80 976,300 986,330 994,340 1000,300 1012,280 1020,300 1028,310 1030,370 1036,340;1316,186 1319,230 1324,260;1352,537 1366,537",
          bars: "0,474 5,474 24,462 30,474 36,438 40,432 74,474 80,498 85,462 90,474 188,378 193,300 198,300 204,414 256,336,360 266,325,350 296,435 388,480 392,480 444,498 458,414 488,84,430 1160,222,320 1230,355,400 1420,288,450 1436,354 1458,498 1468,414 1476,462 1356,450 1376,474" }
    ] },
    { y: 850, floor: 573, cls: "gold-trace", tiles: [
        { x: 80, w: 1000,
          line: "32,500 34,425 38,450 42,530 46,540 50,490 58,510 64,410 72,390 80,385 88,415 95,430 96,572 102,572 104,495 112,490 116,450 122,415 130,460 134,530 140,475 144,535 156,535 160,572 164,572;183,572 186,530;212,572 218,570 222,500 228,535 236,535 240,572 248,572 250,535 256,510 260,572 268,572 272,510 276,510;308,535 309,572;368,572 372,570 376,440 384,430 392,440 399,450;414,572 418,500 426,470 434,570 438,480 442,572 446,560 450,470 458,480;476,572 480,520 488,500 496,510 504,500 508,400 514,410 518,335 523,345 526,480 530,572 536,430 544,420 550,380 556,350 562,450 566,370 574,430 578,365 586,420 592,370 596,500 604,572 612,572 618,500 624,430 638,430 640,572 646,490 654,405 664,430 672,400 680,430 682,330 694,330 696,440 702,572 706,510 716,465 724,460 732,520 740,480 748,500 752,570 760,490 766,440 774,490 782,440 786,572 792,572 796,480 802,450 808,380 818,350 826,290 828,430 834,420 838,350 846,325 852,370 858,410 868,450 876,340 886,390 892,270 898,280 902,380 908,415 914,340 922,320 932,270 940,290 944,360 952,380 960,360 968,375 976,430 984,350 994,305 1000,370 1006,390 1014,345 1022,415 1030,350 1038,330 1042,260 1050,310 1060,330 1066,370 1074,345 1084,410 1094,355 1102,390 1108,500 1114,400 1120,330 1130,310 1134,240 1140,330 1150,410 1156,340 1160,330 1164,240 1172,280 1178,230 1186,225 1192,230 1196,320 1204,330 1212,275 1220,350 1230,330 1236,290 1244,295 1248,360 1256,380 1266,320 1276,345 1282,450 1292,440 1300,420 1306,320 1314,300 1320,350 1330,360 1342,395 1350,360 1354,190 1358,145 1363,290 1372,330 1378,290 1386,340 1396,435 1406,400 1416,365 1426,400 1434,435 1442,330 1448,370 1456,430 1466,400 1474,340 1480,390 1488,365 1498,400 1504,430 1514,390 1520,500 1528,380 1538,390 1548,370 1554,540 1558,480 1564,500",
          bars: "20,504 26,438,534 58,462,535 174,564 208,564 216,492 221,492 258,492 261,492 280,504 302,462 315,444,534 327,528 340,564 346,564 359,564 370,504 399,444 408,528 416,480 446,468 464,528 468,528 1529,318,380" },
        { x: 1078, w: 1000,
          line: "0,500 6,430 12,530 18,440 22,370 28,380 30,572 40,572;48,530 50,560;60,530 64,490 68,570 74,535 84,510 92,572;107,572 111,572;114,572 118,480 120,572 124,430 140,430 144,500 152,490 158,440 166,400 170,440 172,325 180,330 188,430 196,450 202,470 206,400 214,340 222,400 230,330 234,210 242,140 250,160 264,165;264,295 266,315;269,380 272,330 278,210 284,200 288,290 298,370 304,310 314,310 320,365 328,270 338,250 344,310 348,370 354,290 360,345 368,300 376,335 382,235 388,350 404,360 414,345 418,270 424,170 432,165;436,410 438,572 442,500 446,520 448,572 456,535 462,572 466,490 470,572;480,572 484,572;490,572 500,572;510,490 514,560;514,572 528,572 530,420 538,430 544,572 550,420 558,410 560,350 568,345 574,380 582,345 586,500 596,490 600,310 606,290 610,380 618,410 626,445 636,385 646,435 652,400 658,350 664,420 670,400 674,310 680,450 684,380 686,230 694,225 696,440 704,480 710,530 714,572 722,560 726,572 736,510 744,572 750,500 758,535 766,450 770,400 770,572;778,572 786,570 790,500 796,480 802,405 808,500 814,572 822,572 830,540 836,420 844,450 850,572 854,560 858,360 864,260 870,240 876,380 884,430 890,410 896,530 904,440 910,380 918,410 924,360 928,530 936,450 942,490 948,380 956,500 962,400 966,510;1192,572 1198,400 1206,370 1214,330 1222,360 1230,440 1236,350 1242,220 1246,420 1250,500 1256,450 1262,572 1268,410 1274,400 1280,572 1288,520 1294,370 1302,345 1310,325 1314,490 1320,572 1330,440 1336,450;1343,490 1344,572 1370,572 1378,400 1384,440 1389,420 1390,572;1405,572 1408,572;1418,572 1424,500 1432,450 1440,530 1448,480 1454,410 1460,430 1468,430;1476,430 1477,570 1482,570 1486,480 1494,520 1502,450 1512,500 1518,572 1526,572 1534,500 1548,445 1556,530 1564,480",
          over: "240,200 243,125 250,150 256,135 266,135 268,240 274,240 278,155 286,210 290,290;972,530 976,530 980,567 985,567;1010,567 1040,567 1044,480 1050,460 1053,485;1190,480 1192,400 1200,350 1215,325",
          bars: "434,140,530 431,150,165 967,390 1174,528 1177,528 1182,498 1055,504 994,564 1076,564 1080,564 1092,564 1128,564 1168,564 1318,410 1354,408 1357,408 1376,390 1400,420 1416,564 1469,430 90,462 95,462 100,510 112,462 36,528 52,528 136,384,430 440,480 510,468 518,490 525,564 496,528 820,504 745,528 780,528" }
    ] }
];

// transcription sites under the axis
const sites = [
    { x: 80, w: 670, at: "109 145 182 188 221 362 371 394 401 436 483 567 614 698 867 871 903 911 944 952 1007 1237 1292 1327 1334 1409 1412 1474 1507 1515 1541" },
    { x: 740, w: 670, at: "34 137 207 213 229 242 248 262 268 277 303 308 393 478 502 604 645 662 666 678 772 780 790 797 808 820 862 1059 1141 1146 1166 1413 1440 1450 1458 1466" },
    { x: 1400, w: 678, at: "64 68 228 238 275 297 449 475 512 520 528 545 659 667 673 700 705 876 1055 1060 1083 1092 1100 1106 1117 1158 1170 1236 1453 1503", hot: "258 488" }
];

// annotation boxes: class, y, height, [start, end, label]
const boxes = [
    ["probe", 616, 18, [[126, 148], [238, 280], [302, 362], [374, 408], [452, 510], [1166, 1220], [1758, 1834]]],
    ["element", 622, 20, [[1398, 1426], [1692, 1848, "ISH1.8"]]],
    ["forward", 634, 20, [[112, 230, "VNG0001H"], [232, 298], [302, 412, "VNG0003C"], [418, 648, "VNG0005H"], [1080, 1222, "VNG0011C"], [1380, 1400], [1530, 1558], [1568, 1594], [1612, 1620], [1714, 1848, "VNG0021H"], [1914, 2030]]],
    ["probe", 734, 18, [[656, 692], [708, 742], [774, 810], [834, 842], [850, 858], [860, 870], [878, 946], [984, 994], [1000, 1066], [1246, 1266], [1272, 1334], [1478, 1490]]],
    ["partial", 726, 20, [[1230, 1342, "Partial"], [1514, 1516]]],
    ["reverse", 714, 20, [[650, 828, "VNG0006G"], [830, 948, "VNG0008G"], [950, 1068, "VNG0009G"], [1230, 1342, "VNG0013C"], [1428, 1498], [1622, 1684], [2048, 2078]]]
];

const plot = document.getElementById("plot");
let sx = 1;
let sy = 1;

function X(x) { return (x - STRIP.left) * sx; }
function Y(y) { return (y - STRIP.top) * sy; }
function even(x) { return Math.floor(x / 2) * 2; }
function place(tile, u) { return tile.x + u * tile.w / 1568; }

function box(x, y, w, h) {
    return `M${X(x)} ${Y(y)}h${w * sx}v${h * sy}h${-w * sx}z`;
}

function path(cls, d) {
    return `<path class="${cls} crisp" d="${d}"/>`;
}

function drawFrames() {
    let out = "";
    for (const frame of frames) {
        for (const kind of ["l", "g", "r"]) {
            let d = "";
            for (const tile of frame.tiles) {
                for (const item of tile[kind].split(" ")) {
                    const [a, b] = item.split("-").map(Number);
                    if (b) {
                        const start = Math.round(place(tile, a) / 2) * 2;
                        const end = Math.round(place(tile, b) / 2) * 2;
                        d += box(start, frame.y, Math.max(2, end - start), frame.h);
                    } else {
                        d += box(even(place(tile, a)), frame.y, 2, frame.h);
                    }
                }
            }
            out += path(kind, d);
        }
    }
    return out;
}

function drawCircles() {
    let out = "";
    for (const row of circles) {
        for (const x of row.at.split(" ")) {
            out += `<circle class="circle" cx="${X(+x)}" cy="${Y(row.y)}" r="3"/>`;
        }
    }
    return out;
}

function drawPeaks() {
    const steps = [4, 6, 10, 14, 0, 12, 8, 6, 2];
    let out = "";
    for (const row of peaks) {
        for (const [x, top] of row.at) {
            let d = "";
            steps.forEach((h, i) => {
                const height = h || row.base - top;
                d += box(x + (i - 4) * 2, row.base - height, 2, height);
            });
            out += path("bar", d);
        }
    }
    for (const m of marks) {
        out += path("bar", box(...m));
    }
    return out;
}

// one step per 2px column, roughened a little
function stepLine(tile, line, trace, lift, seed) {
    let d = "";
    for (const part of line.split(";")) {
        const pts = part.split(" ").map(p => p.split(",").map(Number));
        if (pts.length === 2 && pts[0][0] === pts[1][0]) {
            if (!lift) {
                const x = X(even(place(tile, pts[0][0])) + 1);
                d += `M${x} ${Y(trace.y + pts[0][1] / 3)}V${Y(trace.y + pts[1][1] / 3)}`;
            }
            continue;
        }
        let i = 0;
        const first = even(place(tile, pts[0][0]));
        const last = even(place(tile, pts[pts.length - 1][0]));
        for (let x = first; x <= last; x += 2) {
            while (i < pts.length - 2 && place(tile, pts[i + 1][0]) < x) i++;
            const [x0, y0] = pts[i];
            const [x1, y1] = pts[i + 1];
            const a = place(tile, x0);
            const b = place(tile, x1);
            const t = b > a ? Math.min(1, Math.max(0, (x - a) / (b - a))) : 1;
            let v = y0 + (y1 - y0) * t;
            if (v < trace.floor - 30) {
                seed = (seed * 1103515245 + 12345) % 2147483648;
                v += (seed / 2147483648 - 0.5) * 34;
            }
            v = even(trace.y + Math.min(v, trace.floor) / 3 - lift) + 1;
            d += x === first ? `M${X(x)} ${Y(v)}` : `V${Y(v)}`;
            d += `H${X(x + 2)}`;
        }
    }
    return d;
}

function drawTraces() {
    let out = "";
    for (const trace of traces) {
        let blue = "";
        let top = "";
        let bars = "";
        trace.tiles.forEach((tile, n) => {
            blue += stepLine(tile, tile.line, trace, 3, n + 7);
            if (tile.over) blue += stepLine(tile, tile.over, trace, 0, n + 3);
            top += stepLine(tile, tile.line, trace, 0, n + 7);
            for (const item of tile.bars.split(" ")) {
                const [x, y0, y1 = trace.floor - 3] = item.split(",").map(Number);
                bars += box(even(place(tile, x)), trace.y + Math.round(y0 / 3), 2, Math.max(2, Math.round((y1 - y0) / 3)));
            }
        });
        out += path("trace", blue) + path("bar", bars) + path(trace.cls, top);
    }
    return out;
}

function drawSites() {
    const steps = [2, 4, 8, 12, 14, 14, 10, 6, 2];
    let out = "";
    for (const tile of sites) {
        for (const cls of ["at", "hot"]) {
            if (!tile[cls]) continue;
            for (const u of tile[cls].split(" ")) {
                const x = even(place(tile, +u));
                let d = "";
                steps.forEach((h, i) => { d += box(x + (i - 4) * 2, 694 - h, 2, h); });
                out += path(cls === "hot" ? "site hot" : "site", d);
            }
        }
    }
    return out;
}

function drawBoxes() {
    let out = "";
    for (const [cls, y, h, items] of boxes) {
        for (const [start, end, label] of items) {
            out += path(cls, box(start, y, end - start, h));
            if (label) out += `<text x="${X(start)}" y="${Y(y + h)}">${label}</text>`;
        }
    }
    return out;
}

function draw() {
    const size = plot.getBoundingClientRect();
    sx = size.width / STRIP.width;
    sy = size.height / STRIP.height;
    plot.innerHTML = drawFrames() + drawCircles() + drawPeaks() + drawBoxes() + drawTraces() +
        drawSites() +
        path("axis", box(88, 677, 1990, 2) + box(1081, 671, 2, 14)) +
        `<text class="axis-label" x="${X(1083)}" y="${Y(710)}">10000</text>`;
}

draw();
window.addEventListener("resize", draw);
```
